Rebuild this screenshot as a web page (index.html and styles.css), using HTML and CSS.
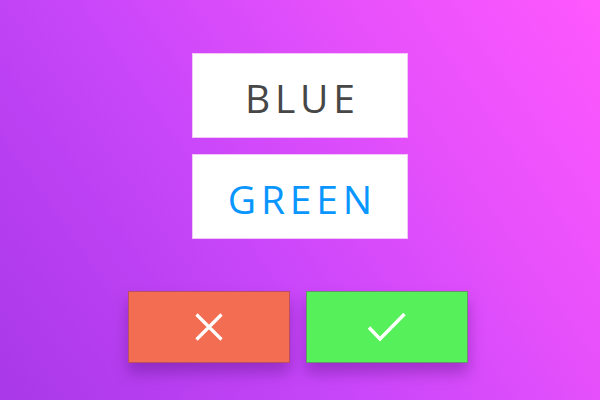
FILE: index.html
```html
<!DOCTYPE html>
<html>
<head>
<meta charset="utf-8">
<link rel="stylesheet" href="styles.css">
</head>
<body>
<main class="screen">
  <div class="cards">
    <div class="card"><span class="word word-dark">BLUE</span></div>
    <div class="card"><span class="word word-blue">GREEN</span></div>
  </div>
  <div class="actions">
    <button class="btn btn-no" aria-label="No">
      <svg width="28" height="28" viewBox="0 0 28 28"><path d="M1.5 1.5 L26.5 26.5 M26.5 1.5 L1.5 26.5" stroke="#fff" stroke-width="3.2" fill="none"/></svg>
    </button>
    <button class="btn btn-yes" aria-label="Yes">
      <svg width="40" height="30" viewBox="0 0 40 30"><path d="M2 15.5 L13 27 L37.5 2" stroke="#fff" stroke-width="3.4" fill="none" stroke-linejoin="miter"/></svg>
    </button>
  </div>
</main>
</body>
</html>
```
FILE: styles.css
```css
html, body {
  margin: 0;
  padding: 0;
  width: 600px;
  height: 400px;
  overflow: hidden;
}
body {
  background: linear-gradient(55deg, #a838e8 0%, #c846fa 40%, #e650fb 70%, #ff58fe 100%);
  font-family: "Open Sans", "Noto Sans", sans-serif;
}
.screen {
  display: flex;
  flex-direction: column;
  align-items: center;
  padding-top: 53px;
}
.cards {
  display: flex;
  flex-direction: column;
  gap: 16px;
}
.card {
  box-sizing: border-box;
  width: 216px;
  height: 85px;
  padding-top: 3px;
  background: #fff;
  border: 1px solid #f3c6f8;
  display: flex;
  align-items: center;
  justify-content: center;
}
.word {
  font-size: 39px;
  letter-spacing: 4.8px;
  margin-right: -4.8px;
  line-height: 1;
}
.word-dark { color: #474747; }
.word-blue { color: #0a96ff; }
.actions {
  display: flex;
  gap: 16px;
  margin-top: 52px;
  margin-right: 5px;
}
.btn {
  width: 162px;
  height: 72px;
  border: 1px solid rgba(120, 40, 120, 0.45);
  padding: 0;
  display: flex;
  align-items: center;
  justify-content: center;
  box-shadow: 0 10px 14px rgba(70, 10, 110, 0.35);
}
.btn-no { background: #f26d51; }
.btn-yes { background: #55f05a; }
```
